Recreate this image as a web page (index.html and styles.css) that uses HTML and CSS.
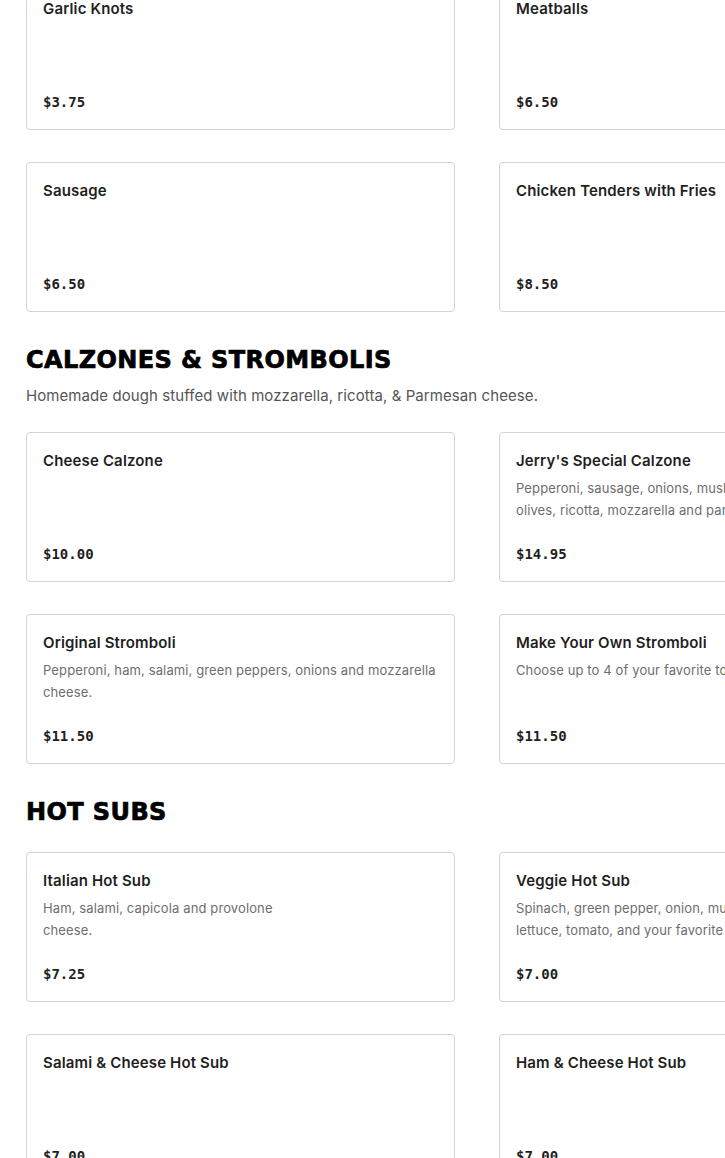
FILE: index.html
```html
<!DOCTYPE html>
<html>
<head>
<meta charset="utf-8">
<link rel="stylesheet" href="styles.css">
</head>
<body>
<main class="menu">
  <section class="section first">
    <div class="grid">
      <div class="card"><div class="title">Garlic Knots</div><div class="price">$3.75</div></div>
      <div class="card"><div class="title">Meatballs</div><div class="price">$6.50</div></div>
      <div class="card"><div class="title">Sausage</div><div class="price">$6.50</div></div>
      <div class="card"><div class="title">Chicken Tenders with Fries</div><div class="price">$8.50</div></div>
    </div>
  </section>

  <section class="section">
    <header class="sec-head">
      <h2 class="sec-title">CALZONES &amp; STROMBOLIS</h2>
      <p class="sec-sub">Homemade dough stuffed with mozzarella, ricotta, &amp; Parmesan cheese.</p>
    </header>
    <div class="grid">
      <div class="card"><div class="title">Cheese Calzone</div><div class="price">$10.00</div></div>
      <div class="card"><div class="title">Jerry's Special Calzone</div><p class="desc">Pepperoni, sausage, onions, mushrooms, green peppers, black olives, ricotta, mozzarella and parmesan cheese.</p><div class="price">$14.95</div></div>
      <div class="card"><div class="title">Original Stromboli</div><p class="desc">Pepperoni, ham, salami, green peppers, onions and mozzarella cheese.</p><div class="price">$11.50</div></div>
      <div class="card"><div class="title">Make Your Own Stromboli</div><p class="desc">Choose up to 4 of your favorite toppings.</p><div class="price">$11.50</div></div>
    </div>
  </section>

  <section class="section">
    <header class="sec-head">
      <h2 class="sec-title">HOT SUBS</h2>
    </header>
    <div class="grid">
      <div class="card"><div class="title">Italian Hot Sub</div><p class="desc narrow">Ham, salami, capicola and provolone cheese.</p><div class="price">$7.25</div></div>
      <div class="card"><div class="title">Veggie Hot Sub</div><p class="desc">Spinach, green pepper, onion, mushrooms, black olives,<br>lettuce, tomato, and your favorite cheese.</p><div class="price">$7.00</div></div>
      <div class="card"><div class="title">Salami &amp; Cheese Hot Sub</div><div class="price">$7.00</div></div>
      <div class="card"><div class="title">Ham &amp; Cheese Hot Sub</div><div class="price">$7.00</div></div>
    </div>
  </section>
</main>
</body>
</html>
```
FILE: styles.css
```css
html, body {
  margin: 0;
  padding: 0;
  background: #ffffff;
  overflow: hidden;
}
body {
  font-family: Inter, "Liberation Sans", sans-serif;
  color: #1f1f1f;
}
.menu {
  padding: 0 26px;
  width: 902px;
}
.section {
  margin-top: 32px;
}
.section.first {
  margin-top: -20px;
}
.sec-head {
  margin-bottom: 24px;
}
.sec-title {
  margin: 0;
  font-family: "DejaVu Sans", sans-serif;
  font-weight: 900;
  font-size: 24px;
  line-height: 32px;
  color: #000;
  letter-spacing: 0.4px;
  -webkit-text-stroke: 0.7px #000;
}
.sec-sub {
  margin: 8px 0 0;
  font-size: 15px;
  line-height: 24px;
  letter-spacing: 0.08px;
  color: #555;
}
.grid {
  display: grid;
  grid-template-columns: 429px 429px;
  column-gap: 44px;
  row-gap: 32px;
}
.card {
  box-sizing: border-box;
  height: 150px;
  border: 1px solid #d4d4d4;
  border-radius: 4px;
  padding: 16px;
  display: flex;
  flex-direction: column;
}
.title {
  font-size: 15px;
  font-weight: 600;
  line-height: 24px;
  letter-spacing: 0.15px;
  color: #1f1f1f;
}
.desc {
  margin: 4px 0 0;
  font-size: 13px;
  line-height: 22px;
  letter-spacing: 0.12px;
  color: #6e6e6e;
}
.desc.narrow {
  max-width: 260px;
}
.price {
  margin-top: auto;
  font-family: "DejaVu Sans Mono", monospace;
  font-weight: 700;
  font-size: 14px;
  line-height: 22px;
  color: #1f1f1f;
}
```
